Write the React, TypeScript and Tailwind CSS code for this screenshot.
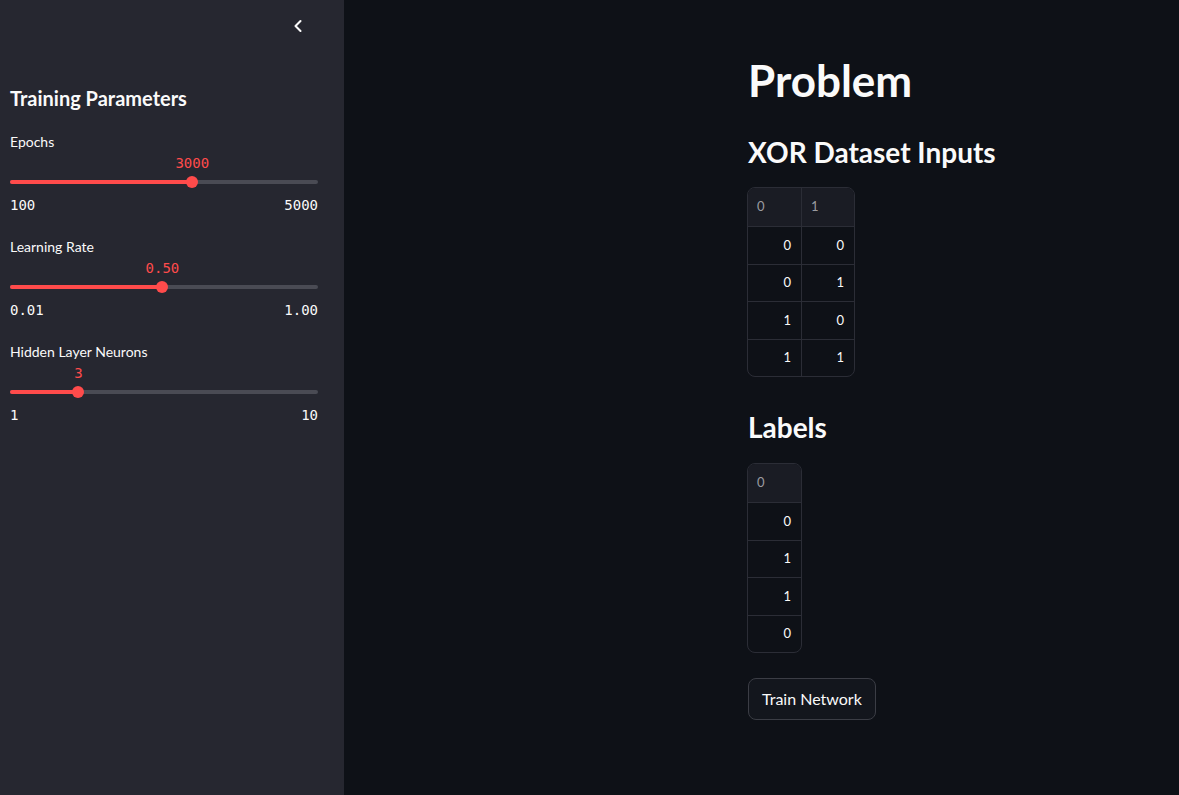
import { ChevronLeft } from "lucide-react"

const SANS = "font-['Lato','Noto_Sans',sans-serif]"
const MONO = "font-['DejaVu_Sans_Mono','Liberation_Mono',monospace]"

const sliders = [
  { label: "Epochs", value: "3000", min: "100", max: "5000", pct: 0.5918 },
  { label: "Learning Rate", value: "0.50", min: "0.01", max: "1.00", pct: 0.4949 },
  { label: "Hidden Layer Neurons", value: "3", min: "1", max: "10", pct: 0.2222 },
]

const inputs = [
  [0, 0],
  [0, 1],
  [1, 0],
  [1, 1],
]
const labels = [0, 1, 1, 0]

function Slider({ s }: { s: (typeof sliders)[number] }) {
  return (
    <div className="h-[105px]">
      <p className="text-[14px] text-[#fafafa] leading-[20px] pt-[1px]">{s.label}</p>
      <div className="relative h-[40px]">
        <span
          className={`absolute top-[2px] -translate-x-1/2 text-[14px] leading-[18px] text-[#ff4b4b] ${MONO}`}
          style={{ left: `${s.pct * 100}%` }}
        >
          {s.value}
        </span>
        <div className="absolute left-0 right-0 top-[28px] h-[4px] rounded-full bg-[#4a4b54]">
          <div className="h-full rounded-full bg-[#ff4b4b]" style={{ width: `${s.pct * 100}%` }} />
        </div>
        <div
          className="absolute top-[24px] w-[12px] h-[12px] -ml-[6px] rounded-full bg-[#ff4b4b]"
          style={{ left: `${s.pct * 100}%` }}
        />
      </div>
      <div className={`flex justify-between mt-[3px] text-[14px] leading-[20px] text-[#fafafa] ${MONO}`}>
        <span>{s.min}</span>
        <span>{s.max}</span>
      </div>
    </div>
  )
}

function Table({ cols, rows }: { cols: number[]; rows: number[][] }) {
  return (
    <div className="inline-block -ml-[1px] rounded-[8px] border border-[#2b2d36] overflow-hidden">
      <div className="flex bg-[#1a1c24] border-b border-[#2b2d36]">
        {cols.map((c, i) => (
          <div
            key={c}
            className={`w-[53px] h-[38px] flex items-center px-[9px] text-[13px] text-[#9a9ba0] ${i > 0 ? "border-l border-[#2b2d36]" : ""}`}
          >
            {c}
          </div>
        ))}
      </div>
      {rows.map((r, ri) => (
        <div key={ri} className={`flex ${ri > 0 ? "border-t border-[#2b2d36]" : ""}`}>
          {r.map((v, i) => (
            <div
              key={i}
              className={`w-[53px] h-[36.5px] flex items-center justify-end px-[10px] text-[13px] text-[#fafafa] ${i > 0 ? "border-l border-[#2b2d36]" : ""}`}
            >
              {v}
            </div>
          ))}
        </div>
      ))}
    </div>
  )
}

export default function App() {
  return (
    <div className={`flex w-[1179px] h-[795px] overflow-hidden bg-[#0e1117] text-[#fafafa] ${SANS}`}>
      {/* Sidebar */}
      <aside className="w-[344px] shrink-0 bg-[#262730] px-[10px]">
        <div className="flex justify-end pr-[26px] pt-[16px] h-[82px]">
          <ChevronLeft size={20} strokeWidth={2.5} className="text-[#fafafa]" />
        </div>
        <h2 className="text-[20px] font-bold leading-[32px] mb-[17px] w-[308px]">Training Parameters</h2>
        <div className="w-[308px]">
          {sliders.map((s) => (
            <Slider key={s.label} s={s} />
          ))}
        </div>
      </aside>

      {/* Main */}
      <main className="flex-1 pl-[404px] pt-[52px]">
        <h1 className="text-[44px] font-bold leading-[56px]">Problem</h1>
        <h2 className="text-[28px] font-bold leading-[40px] mt-[24px] mb-[15px]">XOR Dataset Inputs</h2>
        <Table cols={[0, 1]} rows={inputs} />
        <h2 className="text-[28px] font-bold leading-[40px] mt-[24px] mb-[16px]">Labels</h2>
        <Table cols={[0]} rows={labels.map((l) => [l])} />
        <div className="mt-[19px]">
          <button className="h-[42px] px-[13px] rounded-[8px] border border-[#3b3d45] bg-[#13161d] text-[16px] text-[#fafafa]">
            Train Network
          </button>
        </div>
      </main>
    </div>
  )
}
